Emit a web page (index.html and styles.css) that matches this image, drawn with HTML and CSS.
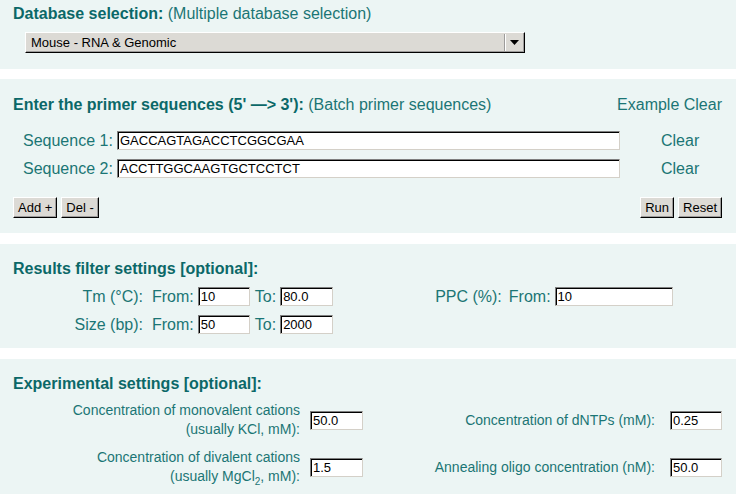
FILE: index.html
```html
<!DOCTYPE html>
<html>
<head>
<meta charset="utf-8">
<link rel="stylesheet" href="styles.css">
</head>
<body>
<section class="panel p-db">
  <div class="heading"><b>Database selection:</b> (Multiple database selection)</div>
  <div class="select">
    <span class="select-text">Mouse - RNA &amp; Genomic</span>
    <span class="select-btn"><svg width="9" height="5" viewBox="0 0 9 5"><path d="M0 0H9L4.5 5Z" fill="#000"/></svg></span>
  </div>
</section>

<section class="panel p-seq">
  <div class="heading row-between">
    <div><b>Enter the primer sequences (5' —&gt; 3'):</b> (Batch primer sequences)</div>
    <div>Example Clear</div>
  </div>
  <div class="seq-rows">
    <div class="seq-row">
      <span class="seq-label">Sequence 1:</span>
      <input class="field seq-input" type="text" value="GACCAGTAGACCTCGGCGAA">
      <span class="seq-clear">Clear</span>
    </div>
    <div class="seq-row">
      <span class="seq-label">Sequence 2:</span>
      <input class="field seq-input" type="text" value="ACCTTGGCAAGTGCTCCTCT">
      <span class="seq-clear">Clear</span>
    </div>
  </div>
  <div class="btn-row">
    <div class="btn-group">
      <button class="btn">Add +</button>
      <button class="btn">Del -</button>
    </div>
    <div class="btn-group">
      <button class="btn">Run</button>
      <button class="btn">Reset</button>
    </div>
  </div>
</section>

<section class="panel p-filter">
  <div class="heading"><b>Results filter settings [optional]:</b></div>
  <div class="filter-rows">
    <div class="filter-row">
      <span class="f-label">Tm (°C):</span>
      <span class="f-from">From:</span>
      <input class="field f-in1" type="text" value="10">
      <span class="f-to">To:</span>
      <input class="field f-in2" type="text" value="80.0">
      <span class="f-ppc">PPC (%):</span>
      <span class="f-from2">From:</span>
      <input class="field f-in3" type="text" value="10">
    </div>
    <div class="filter-row">
      <span class="f-label">Size (bp):</span>
      <span class="f-from">From:</span>
      <input class="field f-in1" type="text" value="50">
      <span class="f-to">To:</span>
      <input class="field f-in2" type="text" value="2000">
    </div>
  </div>
</section>

<section class="panel p-exp">
  <div class="heading"><b>Experimental settings [optional]:</b></div>
  <div class="exp-grid">
    <div class="e-label">Concentration of monovalent cations<br>(usually KCl, mM):</div>
    <div class="e-cell1"><input class="field e-in1" type="text" value="50.0"></div>
    <div class="e-label">Concentration of dNTPs (mM):</div>
    <div class="e-cell2"><input class="field e-in2" type="text" value="0.25"></div>

    <div class="e-label">Concentration of divalent cations<br>(usually MgCl<sub>2</sub>, mM):</div>
    <div class="e-cell1"><input class="field e-in1" type="text" value="1.5"></div>
    <div class="e-label">Annealing oligo concentration (nM):</div>
    <div class="e-cell2"><input class="field e-in2" type="text" value="50.0"></div>
  </div>
</section>
</body>
</html>
```

FILE: styles.css
```css
html, body {
  margin: 0;
  padding: 0;
  background: #ffffff;
}
body {
  font-family: "Liberation Sans", Arial, sans-serif;
  font-size: 16px;
  color: #1b7575;
}
.panel {
  background: #ecf5f4;
  padding: 0 14px 0 13px;
  margin-bottom: 11px;
}
.heading {
  line-height: 19px;
  height: 19px;
}
.heading b {
  color: #0b6868;
}
.row-between {
  display: flex;
  justify-content: space-between;
}

/* panel 1 */
.p-db {
  padding-top: 4px;
  padding-bottom: 16px;
  margin-bottom: 10px;
}
.select {
  margin: 9px 0 0 12px;
  width: 500px;
  height: 21px;
  box-sizing: border-box;
  background: #dcdad5;
  border: 1px solid;
  border-color: #ffffff #000000 #000000 #ffffff;
  box-shadow: inset -1px -1px 0 #9d9c9b;
  display: flex;
  align-items: center;
  color: #000;
  font-size: 13px;
}
.select-text {
  flex: 1;
  padding-left: 5px;
}
.select-btn {
  width: 18px;
  height: 17px;
  border-left: 1px solid #9d9c9b;
  box-shadow: inset 1px 0 0 #ffffff;
  display: flex;
  align-items: center;
  justify-content: center;
  margin-right: 1px;
}

/* fields */
.field {
  box-sizing: border-box;
  height: 19px;
  margin: 0;
  padding: 0 0 0 2px;
  border: 1px solid;
  border-color: #7f7f7f #d4d0c8 #d4d0c8 #7f7f7f;
  box-shadow: inset 1px 1px 0 #000000;
  background: #ffffff;
  font-family: "Liberation Sans", Arial, sans-serif;
  font-size: 13px;
  color: #000;
  outline: none;
}

/* panel 2 */
.p-seq {
  padding-top: 16px;
  padding-bottom: 15px;
}
.seq-rows {
  margin-top: 17px;
  display: flex;
  flex-direction: column;
  gap: 9px;
}
.seq-row {
  display: flex;
  align-items: center;
  height: 19px;
  padding-left: 10px;
}
.seq-label {
  width: 94px;
}
.seq-input {
  width: 503px;
  height: 19px;
}
.seq-clear {
  margin-left: 41px;
}
.btn-row {
  margin-top: 19px;
  display: flex;
  justify-content: space-between;
}
.btn-group {
  display: flex;
  gap: 4px;
}
.btn {
  height: 21px;
  box-sizing: border-box;
  margin: 0;
  padding: 0 4px;
  background: #dcdad5;
  border: 1px solid;
  border-color: #ffffff #000000 #000000 #ffffff;
  box-shadow: inset -1px -1px 0 #9d9c9b;
  font-family: "Liberation Sans", Arial, sans-serif;
  font-size: 13px;
  color: #000;
}

/* panel 3 */
.p-filter {
  padding-top: 15px;
  padding-bottom: 14px;
}
.filter-rows {
  margin-top: 9px;
  display: flex;
  flex-direction: column;
  gap: 9px;
}
.filter-row {
  display: flex;
  align-items: center;
  height: 19px;
}
.f-label {
  width: 130px;
  text-align: right;
}
.f-from {
  margin-left: 9px;
}
.f-in1 {
  margin-left: 4px;
  width: 52px;
}
.f-to {
  margin-left: 5px;
}
.f-in2 {
  margin-left: 4px;
  width: 53px;
}
.f-ppc {
  margin-left: 102px;
}
.f-from2 {
  margin-left: 7px;
}
.f-in3 {
  margin-left: 4px;
  width: 118px;
}

/* panel 4 */
.p-exp {
  padding-top: 15px;
  padding-bottom: 20px;
}
.exp-grid {
  margin-top: 8px;
  display: grid;
  grid-template-columns: 287px 63px 292px 67px;
  row-gap: 9px;
  align-items: center;
  font-size: 14px;
  line-height: 19px;
}
.e-label {
  text-align: right;
}
.e-label sub {
  font-size: 10px;
  line-height: 0;
}
.e-cell1 {
  display: flex;
  justify-content: flex-end;
}
.e-cell2 {
  display: flex;
  justify-content: flex-end;
}
.e-in1 {
  width: 53px;
}
.e-in2 {
  width: 52px;
}
```
